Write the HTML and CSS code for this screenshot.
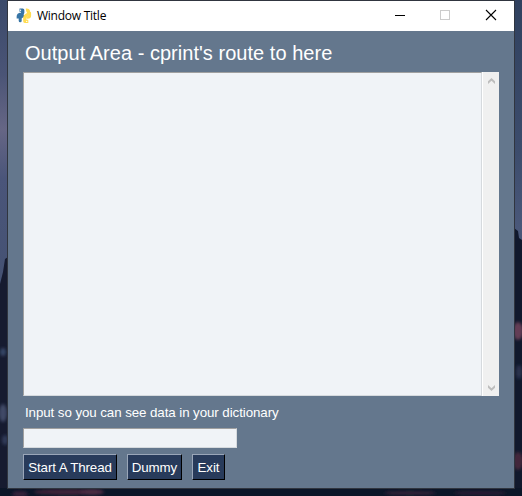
FILE: index.html
```html
<!DOCTYPE html>
<html lang="en">
<head>
<meta charset="utf-8">
<title>Window Title</title>
<link rel="stylesheet" href="styles.css">
</head>
<body>
<svg class="wallpaper" viewBox="0 0 522 496" aria-hidden="true">
  <defs>
    <linearGradient id="skyLeft" x1="0" y1="0" x2="0" y2="1">
      <stop offset="0" stop-color="#3b4a6b"/><stop offset=".15" stop-color="#4a5476"/>
      <stop offset=".26" stop-color="#666685"/><stop offset=".36" stop-color="#4a557a"/>
      <stop offset=".56" stop-color="#455273"/><stop offset="1" stop-color="#1b2238"/>
    </linearGradient>
    <linearGradient id="skyRight" x1="0" y1="0" x2="0" y2="1">
      <stop offset="0" stop-color="#30415f"/><stop offset=".3" stop-color="#3c4c6c"/>
      <stop offset=".46" stop-color="#4a587a"/><stop offset="1" stop-color="#1b2238"/>
    </linearGradient>
    <filter id="soft"><feGaussianBlur stdDeviation="1.5"/></filter>
  </defs>
  <rect width="261" height="496" fill="url(#skyLeft)"/>
  <rect x="261" width="261" height="496" fill="url(#skyRight)"/>
  <path d="M0 284 L3 272 L5 259 L8 257 V496 H0Z" fill="#161b30"/>
  <path d="M514 228 L518 231 L519 238 L522 240 V496 H514Z" fill="#11192d"/>
  <rect y="488" width="522" height="8" fill="#0b1628"/>
  <g filter="url(#soft)">
    <ellipse cx="3" cy="352" rx="3" ry="4" fill="#354565"/>
    <ellipse cx="3" cy="413" rx="4" ry="9" fill="#3f4966"/>
    <ellipse cx="5" cy="440" rx="3" ry="5" fill="#303b59"/>
    <ellipse cx="518" cy="331" rx="5" ry="9" fill="#633d55"/>
    <ellipse cx="519" cy="372" rx="3" ry="7" fill="#29334e"/>
    <ellipse cx="518" cy="461" rx="5" ry="9" fill="#42263b"/>
    <ellipse cx="20" cy="494" rx="8" ry="3" fill="#35203a"/>
    <ellipse cx="68" cy="492" rx="34" ry="3" fill="#3d2339"/>
    <ellipse cx="92" cy="492" rx="12" ry="3" fill="#4c2b43"/>
    <ellipse cx="410" cy="493" rx="26" ry="2" fill="#352138"/>
    <ellipse cx="480" cy="493" rx="26" ry="2" fill="#2b1e35"/>
  </g>
</svg>

<main class="window">
  <header class="titlebar">
    <svg class="logo" viewBox="0 0 16 16" aria-hidden="true">
      <path d="M3.500 2.200H6.700V4.800Q6.700 5.800 5.200 6.100Q2.300 6.600 2.300 8.500V10.500" fill="none" stroke="#3775a6" stroke-width="3.300" stroke-linejoin="round"/>
      <path d="M6.800 8Q4.200 8.500 4.200 10.500V12.800" fill="none" stroke="#3775a6" stroke-width="3" stroke-linecap="round"/>
      <path d="M10 2.200Q12.600 1.800 12.600 4.500Q12.600 6.300 10.500 7.200Q8.800 8 8.800 9.700V13.300H12.300" fill="none" stroke="#ffdc52" stroke-width="3.300" stroke-linejoin="round"/>
      <path d="M13.800 5V7.700Q13.800 9.300 11.500 9.500" fill="none" stroke="#ffdc52" stroke-width="2.600" stroke-linecap="round"/>
      <circle cx="4.500" cy="2.200" r=".7" fill="#fff"/><circle cx="10.700" cy="13.400" r=".7" fill="#fff"/>
    </svg>
    <span class="window-name">Window Title</span>
    <svg class="controls" viewBox="0 0 138 30" shape-rendering="crispEdges" aria-hidden="true">
      <path d="M19 14.500h10" stroke="#000"/>
      <rect x="64.500" y="9.500" width="9" height="9" fill="none" stroke="#ccc"/>
      <path d="M110 9l10 10M120 9l-10 10" stroke="#000" stroke-width="1.100" shape-rendering="auto"/>
    </svg>
  </header>
  <section class="content">
    <h1 class="heading">Output Area - cprint's route to here</h1>
    <div class="output">
      <div class="output-text"></div>
      <div class="scrollbar">
        <svg viewBox="0 0 7 6" aria-hidden="true"><path d="M0 3.300L3.500 0 7 3.300V6L3.500 2.700 0 6Z"/></svg>
        <svg viewBox="0 0 7 6" aria-hidden="true"><path d="M0 0L3.500 3.300 7 0V2.700L3.500 6 0 2.700Z"/></svg>
      </div>
    </div>
    <label class="label" for="entry">Input so you can see data in your dictionary</label>
    <input class="entry" id="entry" type="text">
    <div class="buttons">
      <button class="button thread">Start A Thread</button>
      <button class="button dummy">Dummy</button>
      <button class="button exit">Exit</button>
    </div>
  </section>
</main>
</body>
</html>
```

FILE: styles.css
```css
* { box-sizing: border-box; }
body {
  margin: 0;
  width: 522px;
  height: 496px;
  overflow: hidden;
  padding: 1px 8px 0;
  background: #11192d;
  font-family: "Liberation Sans", Arial, sans-serif;
}
.wallpaper {
  position: absolute;
  inset: 0;
  width: 522px;
  height: 496px;
  z-index: -1;
}
.window {
  width: 506px;
  height: 487px;
  background: #64778d;
  box-shadow: 0 0 0 1px #30353f;
}
.titlebar {
  display: flex;
  align-items: center;
  height: 30px;
  padding-left: 8px;
  background: #fff;
}
.logo { width: 16px; height: 16px; }
.window-name {
  margin-left: 5px;
  font: 12px/16px "Open Sans", sans-serif;
  letter-spacing: -.25px;
  color: #000;
}
.controls { width: 138px; height: 30px; margin-left: auto; }
.content { padding: 0 15px; }
.heading {
  margin: 0;
  height: 41px;
  padding: 10px 0 0 2px;
  font-size: 20px;
  line-height: 24px;
  font-weight: 400;
  letter-spacing: .03px;
  white-space: nowrap;
  color: #fff;
}
.output { display: flex; height: 324px; }
.output-text {
  width: 459px;
  background: #f0f3f7;
  border: 1px solid;
  border-color: #a0a0a0 #d6dade #d6dade #a0a0a0;
}
.scrollbar {
  display: flex;
  flex-direction: column;
  justify-content: space-between;
  align-items: center;
  width: 17px;
  padding: 6px 0 5px;
  border-left: 1px solid #fff;
  background: #f0f0f0;
}
.scrollbar svg { width: 7px; height: 6px; fill: #bdbdbd; }
.label {
  display: block;
  height: 32px;
  padding: 8px 0 0 2px;
  font-size: 13.33px;
  line-height: 17px;
  letter-spacing: -.08px;
  white-space: nowrap;
  color: #fff;
}
.entry {
  display: block;
  width: 214px;
  height: 20px;
  padding: 0 3px;
  background: #f0f3f7;
  border: 1px solid;
  border-color: #a0a0a0 #d6dade #d6dade #a0a0a0;
  border-radius: 0;
  font: 13.33px "Liberation Sans", sans-serif;
}
.buttons { display: flex; gap: 10px; margin-top: 6px; }
.button {
  height: 26px;
  padding: 1px 0 0;
  background: #283b5b;
  border: 1px solid;
  border-color: #9aa6b8 #000 #000 #9aa6b8;
  font: 13.33px/22px "Liberation Sans", sans-serif;
  letter-spacing: -.1px;
  white-space: nowrap;
  color: #fff;
}
.thread { width: 94px; }
.dummy { width: 55px; }
.exit { width: 33px; }
```
